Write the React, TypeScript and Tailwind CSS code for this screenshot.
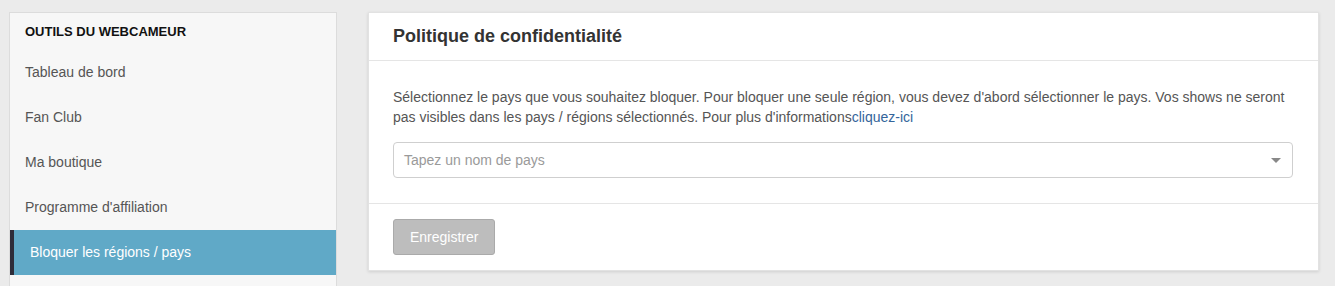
const menu = ["Tableau de bord", "Fan Club", "Ma boutique", "Programme d'affiliation"]

const App = () => {
	return (
		<div className="flex h-[286px] w-full items-start gap-[31px] overflow-hidden bg-[#ebebeb] pl-[9px] pr-[16px] pt-[12px] font-['Liberation_Sans',Arial,sans-serif]">
			<aside className="h-[300px] w-[328px] shrink-0 border border-[#dcdcdc] bg-[#f7f7f7]">
				<div className="flex h-[37px] items-center pl-[15px] text-[13px] font-bold uppercase text-[#111]">
					Outils du webcameur
				</div>
				{menu.map((item) => (
					<div key={item} className="flex h-[45px] items-center pl-[15px] text-[14px] text-[#555]">
						{item}
					</div>
				))}
				<div className="flex h-[45px] items-center border-l-4 border-[#2e2d3a] bg-[#60a9c7] pl-[16px] text-[14px] text-white">
					Bloquer les régions / pays
				</div>
			</aside>
			<section className="w-[951px] shrink-0 border border-[#e2e2e2] bg-white shadow-[0_1px_3px_rgba(0,0,0,0.12)]">
				<div className="flex h-[48px] items-center border-b border-[#e5e5e5] px-[24px] text-[18px] font-bold text-[#333]">
					Politique de confidentialité
				</div>
				<div className="border-b border-[#e5e5e5] px-[24px] pb-[25px] pt-[26px]">
					<p className="w-[900px] text-[14px] leading-[20px] text-[#555]">
						Sélectionnez le pays que vous souhaitez bloquer. Pour bloquer une seule région, vous devez d'abord
						sélectionner le pays. Vos shows ne seront pas visibles dans les pays / régions sélectionnés. Pour plus
						d'informations<a className="text-[#34659b]">cliquez-ici</a>
					</p>
					<div className="mt-[15px] flex h-[36px] w-[900px] items-center justify-between rounded-[4px] border border-[#cfcfcf] pl-[10px] pr-[11px]">
						<span className="text-[14px] text-[#9a9a9a]">Tapez un nom de pays</span>
						<span className="h-0 w-0 border-x-[5px] border-t-[5px] border-x-transparent border-t-[#888]" />
					</div>
				</div>
				<div className="px-[24px] pb-[15px] pt-[15px]">
					<button className="h-[36px] rounded-[3px] border border-[#aaa] bg-[#bdbdbd] px-[16px] text-[14px] text-white">
						Enregistrer
					</button>
				</div>
			</section>
		</div>
	)
}

export default App
